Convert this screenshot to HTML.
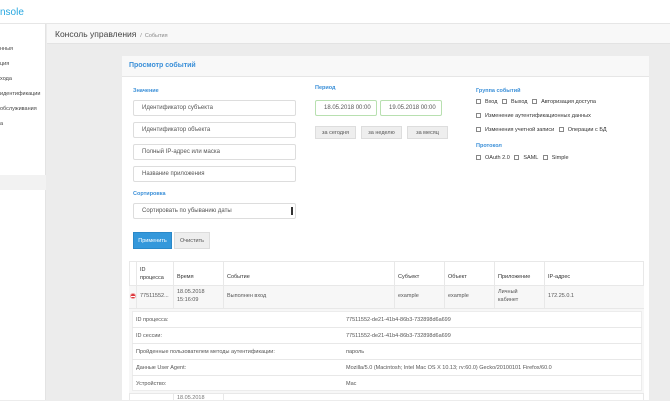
<!DOCTYPE html>
<html><head><meta charset="utf-8"><style>
*{box-sizing:border-box;margin:0;padding:0}
body{width:670px;height:400px;overflow:hidden;background:#ececec;font-family:"Liberation Sans",sans-serif;font-size:6px;color:#333;position:relative}
.a{position:absolute;white-space:nowrap}
.inp{position:absolute;background:#fff;border:1px solid #ddd;border-radius:2px;padding-left:8px;font-size:6px;color:#555;display:flex;align-items:center}
.btn{position:absolute;background:#eee;border:1px solid #ddd;font-size:5.5px;color:#555;display:flex;align-items:center;justify-content:center}
.lbl{position:absolute;color:#3a8fd8;font-size:5.5px;font-weight:bold}
.cb{display:inline-block;width:5px;height:5px;border:1px solid #888;margin-right:4px;vertical-align:-1px}
.vl{position:absolute;width:1px;background:#e8e8e8}
.hl{position:absolute;height:1px;background:#e8e8e8}
</style></head><body>
<div class="a" style="left:0;top:0;width:670px;height:24px;background:#fff;border-bottom:1px solid #e6e6e6"></div>
<div class="a" style="left:0;top:7px;font-size:10px;color:#29a8e0">nsole</div>
<div class="a" style="left:0;top:24px;width:46px;height:376px;background:#fff;border-right:1px solid #e3e3e3"></div>
<div class="a" style="left:0;top:175px;width:46px;height:15px;background:#f2f2f2"></div>
<div class="a" style="left:0;top:42px;font-size:5.5px;line-height:15px;color:#444">нныя<br>ция<br>хода<br>идентификации<br>обслуживания<br>а</div>
<div class="a" style="left:47px;top:24px;width:623px;height:20px;background:#f8f8f8;border-bottom:1px solid #e3e3e3"></div>
<div class="a" style="left:55px;top:29px;font-size:8.5px;color:#444">Консоль управления <span style="font-size:5.5px;color:#888">&nbsp;/&nbsp; События</span></div>
<div class="a" style="left:122px;top:56px;width:527px;height:344px;background:#fff"></div>
<div class="a" style="left:122px;top:56px;width:527px;height:21px;background:#f8f8f8;border-bottom:1px solid #e6e6e6"></div>
<div class="a" style="left:129px;top:62px;font-size:7px;font-weight:bold;color:#3a8fd8">Просмотр событий</div>

<div class="lbl" style="left:133px;top:88px">Значение</div>
<div class="inp" style="left:133px;top:100px;width:163px;height:16px">Идентификатор субъекта</div>
<div class="inp" style="left:133px;top:122px;width:163px;height:16px">Идентификатор объекта</div>
<div class="inp" style="left:133px;top:144px;width:163px;height:16px">Полный IP-адрес или маска</div>
<div class="inp" style="left:133px;top:166px;width:163px;height:16px">Название приложения</div>
<div class="lbl" style="left:133px;top:191px">Сортировка</div>
<div class="inp" style="left:133px;top:203px;width:163px;height:16px">Сортировать по убыванию даты<span style="position:absolute;right:2px;top:3px;width:2px;height:8px;background:#333"></span></div>
<div class="btn" style="left:133px;top:232px;width:39px;height:17px;background:#3498db;border-color:#2a88c8;color:#fff">Применить</div>
<div class="btn" style="left:174px;top:232px;width:36px;height:17px">Очистить</div>

<div class="lbl" style="left:315px;top:85px">Период</div>
<div class="inp" style="left:315px;top:100px;width:62px;height:16px;border-color:#b8e0b0">18.05.2018 00:00</div>
<div class="inp" style="left:380px;top:100px;width:62px;height:16px;border-color:#b8e0b0">19.05.2018 00:00</div>
<div class="btn" style="left:315px;top:126px;width:41px;height:13px">за сегодня</div>
<div class="btn" style="left:361px;top:126px;width:41px;height:13px">за неделю</div>
<div class="btn" style="left:407px;top:126px;width:41px;height:13px">за месяц</div>

<div class="lbl" style="left:476px;top:88px">Группа событий</div>
<div class="a" style="left:476px;top:99px;font-size:5.5px"><span class="cb"></span>Вход &nbsp; <span class="cb"></span>Выход &nbsp; <span class="cb"></span>Авторизация доступа</div>
<div class="a" style="left:476px;top:113px;font-size:5.5px"><span class="cb"></span>Изменение аутентификационных данных</div>
<div class="a" style="left:476px;top:127px;font-size:5.5px"><span class="cb"></span>Изменения учетной записи &nbsp; <span class="cb"></span>Операции с БД</div>
<div class="lbl" style="left:476px;top:143px">Протокол</div>
<div class="a" style="left:476px;top:155px;font-size:5.5px"><span class="cb"></span>OAuth 2.0 &nbsp; <span class="cb"></span>SAML &nbsp; <span class="cb"></span>Simple</div>

<div class="a" style="left:129px;top:261px;width:515px;height:139px;border:1px solid #e8e8e8;border-bottom:none"></div>
<div class="a" style="left:129px;top:285px;width:515px;height:24px;background:#f7f7f7"></div>
<div class="hl" style="left:129px;top:285px;width:515px"></div>
<div class="hl" style="left:129px;top:308px;width:515px"></div>
<div class="vl" style="left:136px;top:261px;height:47px"></div>
<div class="vl" style="left:173px;top:261px;height:47px"></div>
<div class="vl" style="left:223px;top:261px;height:47px"></div>
<div class="vl" style="left:394px;top:261px;height:47px"></div>
<div class="vl" style="left:444px;top:261px;height:47px"></div>
<div class="vl" style="left:494px;top:261px;height:47px"></div>
<div class="vl" style="left:544px;top:261px;height:47px"></div>
<div class="a" style="left:140px;top:266px;font-size:5.5px;line-height:8px">ID<br>процесса</div>
<div class="a" style="left:177px;top:274px;font-size:5.5px">Время</div>
<div class="a" style="left:227px;top:274px;font-size:5.5px">Событие</div>
<div class="a" style="left:398px;top:274px;font-size:5.5px">Субъект</div>
<div class="a" style="left:448px;top:274px;font-size:5.5px">Объект</div>
<div class="a" style="left:498px;top:274px;font-size:5.5px">Приложение</div>
<div class="a" style="left:548px;top:274px;font-size:5.5px">IP-адрес</div>
<div class="a" style="left:130px;top:293px;width:6px;height:6px;border-radius:50%;background:#d9343a;border:1px solid #f3a0a0"></div>
<div class="a" style="left:131px;top:295.5px;width:4px;height:1px;background:#fff"></div>
<div class="a" style="left:140px;top:293px;font-size:5.5px;color:#555">77511552...</div>
<div class="a" style="left:177px;top:288px;font-size:5.5px;line-height:8px;color:#555">18.05.2018<br>15:16:09</div>
<div class="a" style="left:227px;top:293px;font-size:5.5px;color:#555">Выполнен вход</div>
<div class="a" style="left:398px;top:293px;font-size:5.5px;color:#555">example</div>
<div class="a" style="left:448px;top:293px;font-size:5.5px;color:#555">example</div>
<div class="a" style="left:498px;top:288px;font-size:5.5px;line-height:8px;color:#555">Личный<br>кабинет</div>
<div class="a" style="left:548px;top:293px;font-size:5.5px;color:#555">172.25.0.1</div>

<div class="a" style="left:129px;top:309px;width:515px;height:84px;background:#f7f7f7"></div>
<div class="a" style="left:132px;top:311px;width:510px;height:80px;background:#fff;border:1px solid #ececec"></div>
<div class="hl" style="left:132px;top:327px;width:510px"></div>
<div class="hl" style="left:132px;top:343px;width:510px"></div>
<div class="hl" style="left:132px;top:359px;width:510px"></div>
<div class="hl" style="left:132px;top:375px;width:510px"></div>
<div class="a" style="left:136px;top:312px;font-size:5.5px;line-height:16px;color:#555">ID процесса:<br>ID сессии:<br>Пройденные пользователем методы аутентификации:<br>Данные User Agent:<br>Устройство:</div>
<div class="a" style="left:346px;top:312px;font-size:5.5px;line-height:16px;color:#555">77511552-de21-41b4-86b3-732898d6a699<br>77511552-de21-41b4-86b3-732898d6a699<br>пароль<br>Mozilla/5.0 (Macintosh; Intel Mac OS X 10.13; rv:60.0) Gecko/20100101 Firefox/60.0<br>Mac</div>
<div class="hl" style="left:129px;top:393px;width:515px"></div>
<div class="vl" style="left:173px;top:393px;height:7px"></div>
<div class="vl" style="left:223px;top:393px;height:7px"></div>
<div class="a" style="left:177px;top:395px;font-size:5.5px;color:#777">18.05.2018</div>
</body></html>
